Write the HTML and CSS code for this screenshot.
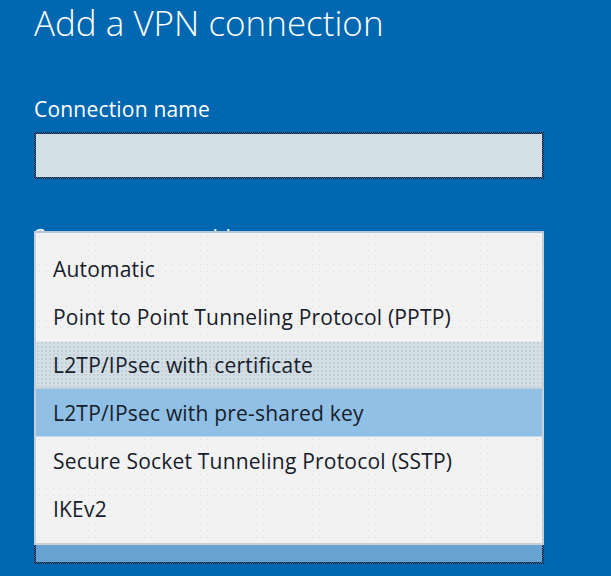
FILE: index.html
```html
<!DOCTYPE html>
<html lang="en">
<head>
<meta charset="utf-8">
<title>Add a VPN connection</title>
<link rel="stylesheet" href="styles.css">
</head>
<body>
<main class="page">
  <h1 class="title">Add a VPN connection</h1>
  <label class="label label-first">Connection name</label>
  <div class="field"></div>
  <label class="label label-second">Server name or address</label>
  <div class="field"></div>
  <div class="field field-combo"></div>

  <ul class="dropdown">
    <li class="option">Automatic</li>
    <li class="option">Point to Point Tunneling Protocol (PPTP)</li>
    <li class="option option-hover">L2TP/IPsec with certificate</li>
    <li class="option option-selected">L2TP/IPsec with pre-shared key</li>
    <li class="option">Secure Socket Tunneling Protocol (SSTP)</li>
    <li class="option">IKEv2</li>
  </ul>
</main>
</body>
</html>
```

FILE: styles.css
```css
html, body {
  margin: 0;
  padding: 0;
}
body {
  background: #0067b0;
  width: 611px;
  height: 576px;
  overflow: hidden;
  font-family: "Open Sans", "Noto Sans", sans-serif;
  color: #ffffff;
}
.page {
  position: relative;
  display: flex;
  flex-direction: column;
  padding-left: 34px;
  width: 510px;
}
.title {
  margin: 0;
  padding-top: 1px;
  font-size: 35px;
  line-height: 44px;
  font-weight: 300;
}
.label {
  display: block;
  font-size: 21px;
  letter-spacing: 0.2px;
  line-height: 28px;
}
.label-first {
  margin-top: 50px;
}
.label-second {
  margin-top: 44px;
}
.field {
  box-sizing: border-box;
  height: 47px;
  margin-top: 9px;
  border: 2px solid transparent;
  background:
    linear-gradient(#d3dfe6, #d3dfe6) padding-box,
    repeating-conic-gradient(#0b1f33 0 25%, #2a6aa0 0 50%) 0 0 / 2px 2px border-box;
}
.field-combo {
  margin-top: 210px;
  background:
    linear-gradient(#66a3d2, #66a3d2) padding-box,
    repeating-conic-gradient(#0b1f33 0 25%, #2a6aa0 0 50%) 0 0 / 2px 2px border-box;
}
.dropdown {
  position: absolute;
  left: 34px;
  top: 231px;
  box-sizing: border-box;
  width: 510px;
  margin: 0;
  padding: 12px 0 10px;
  list-style: none;
  border: 2px solid #c9d0d5;
  border-top-color: #b7c7d6;
  background:
    radial-gradient(circle, #dcdcdc 0.7px, transparent 1px) 0 0 / 7px 7px,
    #f2f2f2;
}
.option {
  display: flex;
  align-items: center;
  height: 48px;
  padding-left: 17px;
  font-size: 21px;
  letter-spacing: 0.2px;
  color: #17202a;
}
.option-hover {
  background:
    radial-gradient(circle, #c3d0d9 0.7px, transparent 1px) 0 0 / 4px 4px,
    #d3dee5;
  box-shadow: inset 0 1px 0 #e4eaee, inset 0 -1px 0 #c2ccd3;
}
.option-selected {
  background: #90c0e6;
  box-shadow: inset 0 -1px 0 #c6dcec;
}
```
